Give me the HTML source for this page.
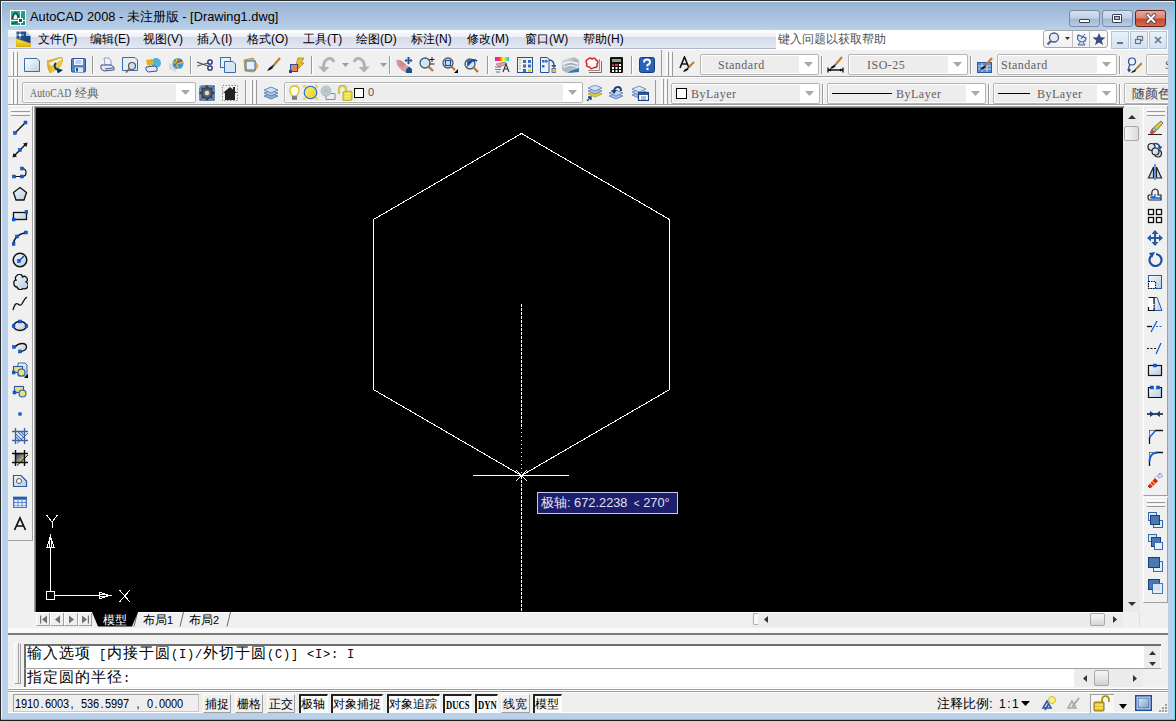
<!DOCTYPE html>
<html><head><meta charset="utf-8"><style>
html,body{margin:0;padding:0;width:1176px;height:721px;overflow:hidden;background:#b9d1ea}
#r{position:relative;width:1176px;height:721px;overflow:hidden;font-family:"Liberation Sans", sans-serif}
#r>div,#r>svg{position:absolute}
.t{white-space:nowrap}
.m{font-family:"Liberation Mono",monospace}
</style></head><body><div id="r">
<div style="left:0px;top:0px;width:1176px;height:721px;background:#b9d1ea"></div>
<div style="left:0px;top:0px;width:1176px;height:1px;background:#2a2a2a"></div>
<div style="left:0px;top:0px;width:1px;height:721px;background:#2a2a2a"></div>
<div style="left:1175px;top:0px;width:1px;height:721px;background:#3a9ad8"></div>
<div style="left:0px;top:720px;width:1176px;height:1px;background:#3a9ad8"></div>
<div style="left:1px;top:1px;width:1174px;height:1px;background:#eef3f9"></div>
<div style="left:1px;top:1px;width:1px;height:719px;background:#eef3f9"></div>
<div style="left:2px;top:2px;width:1172px;height:28px;background:linear-gradient(#97b2d2,#b9d1ea)"></div>
<svg style="left:10px;top:10px;" width="16" height="16" viewBox="0 0 16 16"><defs><linearGradient id="tg" x1="0" y1="0" x2="1" y2="1"><stop offset="0" stop-color="#2ab8a0"/><stop offset="1" stop-color="#12907c"/></linearGradient></defs><rect x="0" y="0" width="16" height="16" fill="#fff"/><rect x="1" y="1" width="14" height="14" fill="url(#tg)"/><path d="M2.5 9 Q3 3 5.5 3 Q8 3 8.5 9" stroke="#0a4a40" stroke-width="1.6" fill="none"/><path d="M3.5 9 Q4 4.5 5.5 4.5 Q7 4.5 7.5 9 Z" fill="#e8f8f4"/><rect x="10" y="1" width="1" height="14" fill="#fff"/><rect x="1" y="10" width="14" height="1" fill="#fff"/><rect x="8.5" y="8.5" width="4" height="4" fill="#0a5a4c" stroke="#fff" stroke-width="1"/><path d="M2 13.5 L7 12.5" stroke="#0a3a34" stroke-width="1"/></svg>
<div class="t" style="left:30px;top:9px;font-size:12.8px;color:#000;line-height:16px">AutoCAD 2008 - 未注册版 - [Drawing1.dwg]</div>
<div style="left:1069px;top:10px;width:31px;height:17px;border:1px solid #7a8aa6;border-radius:3px;box-sizing:border-box;background:linear-gradient(#d4e0ee 0%,#c2d2e6 45%,#a4bad4 55%,#b8cce2 100%)"></div>
<div style="left:1079px;top:19px;width:11px;height:4px;background:#fff;border:1px solid #3a3f55;border-radius:1px;box-sizing:border-box"></div>
<div style="left:1102px;top:10px;width:31px;height:17px;border:1px solid #7a8aa6;border-radius:3px;box-sizing:border-box;background:linear-gradient(#d4e0ee 0%,#c2d2e6 45%,#a4bad4 55%,#b8cce2 100%)"></div>
<div style="left:1112px;top:14px;width:10px;height:9px;border:1px solid #3a3f55;box-sizing:border-box;background:#fff;border-radius:1px"></div>
<div style="left:1114px;top:16px;width:6px;height:4px;background:#aabbd4;border:1px solid #3a3f55;box-sizing:border-box"></div>
<div style="left:1135px;top:10px;width:31px;height:17px;border:1px solid #6b2020;border-radius:3px;box-sizing:border-box;background:linear-gradient(#eaa898 0%,#dc8672 45%,#c44a2e 55%,#d66a48 100%)"></div>
<svg style="left:1145px;top:13px;" width="12" height="11" viewBox="0 0 12 11"><path d="M2.5 2 L9.5 9 M9.5 2 L2.5 9" stroke="#3a3f58" stroke-width="3.6" stroke-linecap="round"/><path d="M2.5 2 L9.5 9 M9.5 2 L2.5 9" stroke="#fff" stroke-width="2" stroke-linecap="round"/></svg>
<div style="left:8px;top:30px;width:1160px;height:7px;background:linear-gradient(#fdfdfe,#eef0f7)"></div>
<div style="left:8px;top:37px;width:1160px;height:11px;background:linear-gradient(#d5dbec,#e4e7f3)"></div>
<div style="left:8px;top:48px;width:1160px;height:1px;background:#b0b4c8"></div>
<svg style="left:16px;top:31px;" width="15" height="16" viewBox="0 0 15 16"><defs><linearGradient id="mg" x1="0" y1="0" x2="1" y2="1"><stop offset="0" stop-color="#2a5a9a"/><stop offset="1" stop-color="#0e3a78"/></linearGradient><linearGradient id="yg" x1="0" y1="0" x2="0" y2="1"><stop offset="0" stop-color="#ffe860"/><stop offset="1" stop-color="#e0b000"/></linearGradient></defs><path d="M0.5 0.5 H10 L14.5 5 V12 H0.5 Z" fill="url(#mg)"/><path d="M10 0.5 L14.5 5 H10 Z" fill="#b8cce0"/><circle cx="4" cy="4" r="1.6" fill="#fff"/><path d="M4 0 V2 M4 6 V8 M0 4 H2 M6 4 H8" stroke="#e8eef6" stroke-width="0.7"/><path d="M0 7.5 L14.8 12.5 V16 H0 Z" fill="url(#yg)" stroke="#c89800" stroke-width="0.5"/></svg>
<div class="t" style="left:38px;top:31px;font-size:12px;color:#000;line-height:16px">文件(F)</div>
<div class="t" style="left:90px;top:31px;font-size:12px;color:#000;line-height:16px">编辑(E)</div>
<div class="t" style="left:143px;top:31px;font-size:12px;color:#000;line-height:16px">视图(V)</div>
<div class="t" style="left:197px;top:31px;font-size:12px;color:#000;line-height:16px">插入(I)</div>
<div class="t" style="left:247px;top:31px;font-size:12px;color:#000;line-height:16px">格式(O)</div>
<div class="t" style="left:303px;top:31px;font-size:12px;color:#000;line-height:16px">工具(T)</div>
<div class="t" style="left:356px;top:31px;font-size:12px;color:#000;line-height:16px">绘图(D)</div>
<div class="t" style="left:411px;top:31px;font-size:12px;color:#000;line-height:16px">标注(N)</div>
<div class="t" style="left:467px;top:31px;font-size:12px;color:#000;line-height:16px">修改(M)</div>
<div class="t" style="left:525px;top:31px;font-size:12px;color:#000;line-height:16px">窗口(W)</div>
<div class="t" style="left:583px;top:31px;font-size:12px;color:#000;line-height:16px">帮助(H)</div>
<div style="left:776px;top:30px;width:392px;height:19px;background:#fff"></div>
<div class="t" style="left:778px;top:31px;font-size:12.3px;color:#505050;line-height:16px">键入问题以获取帮助</div>
<div style="left:1043px;top:30px;width:65px;height:18px;box-sizing:border-box;border:1px solid #a8a8a8;border-radius:3px;background:linear-gradient(#fdfdfd,#f0f0f0)"></div>
<div style="left:1072px;top:31px;width:1px;height:16px;background:#c0c0c0"></div>
<div style="left:1089px;top:31px;width:1px;height:16px;background:#c0c0c0"></div>
<svg style="left:1046px;top:32px;" width="14" height="14" viewBox="0 0 14 14"><circle cx="8" cy="5.5" r="4.5" fill="#e4ecf8" stroke="#4a5a8a" stroke-width="1.3"/><path d="M5 9 L1.5 12.5" stroke="#4a5a8a" stroke-width="2.2"/></svg>
<svg style="left:1065px;top:37px;" width="5" height="3" viewBox="0 0 5 3"><path d="M0 0 L5 0 L2.5 3 Z" fill="#333"/></svg>
<svg style="left:1075px;top:32px;" width="13" height="14" viewBox="0 0 13 14"><path d="M3 3 Q1 9 7 10 Q11 10 11 6 Z" fill="#dfe8f4" stroke="#3a5a9a" stroke-width="1.1"/><path d="M6 7 L10 2" stroke="#3a5a9a" stroke-width="1"/><path d="M5 10 L3 13 H10 L8 10" fill="#c8d8ec" stroke="#3a5a9a" stroke-width="0.9"/></svg>
<svg style="left:1092px;top:32px;" width="14" height="14" viewBox="0 0 14 14"><path d="M7 1 L8.8 5.3 L13.5 5.5 L9.8 8.4 L11 13 L7 10.4 L3 13 L4.2 8.4 L0.5 5.5 L5.2 5.3 Z" fill="#3a4e88"/></svg>
<div style="left:1111px;top:31px;width:18px;height:18px;box-sizing:border-box;border:1px solid #b4c4d8;background:linear-gradient(#e8f0f8,#d4e2f2)"></div>
<svg style="left:1114px;top:34px;" width="12" height="12" viewBox="0 0 12 12"><rect x="3" y="8" width="6" height="2" fill="#6a7484"/></svg>
<div style="left:1130px;top:31px;width:18px;height:18px;box-sizing:border-box;border:1px solid #b4c4d8;background:linear-gradient(#e8f0f8,#d4e2f2)"></div>
<svg style="left:1133px;top:34px;" width="12" height="12" viewBox="0 0 12 12"><rect x="4.5" y="2.5" width="5" height="4" fill="none" stroke="#6a7484" stroke-width="1.2"/><rect x="2.5" y="5.5" width="5" height="4" fill="#dde8f4" stroke="#6a7484" stroke-width="1.2"/></svg>
<div style="left:1149px;top:31px;width:18px;height:18px;box-sizing:border-box;border:1px solid #b4c4d8;background:linear-gradient(#e8f0f8,#d4e2f2)"></div>
<svg style="left:1152px;top:34px;" width="12" height="12" viewBox="0 0 12 12"><path d="M3 3 L9 9 M9 3 L3 9" stroke="#6a7484" stroke-width="1.6"/></svg>
<div style="left:8px;top:49px;width:1160px;height:58px;background:#f0f0f0"></div>
<div style="left:8px;top:49px;width:1160px;height:1px;background:#fff"></div>
<div style="left:8px;top:76px;width:1160px;height:1px;background:#a0a0a0"></div>
<div style="left:8px;top:77px;width:1160px;height:1px;background:#fff"></div>
<div style="left:8px;top:104px;width:1160px;height:1px;background:#a0a0a0"></div>
<div style="left:8px;top:105px;width:1160px;height:1px;background:#fff"></div>
<div style="left:11px;top:52px;width:3px;height:24px;border-left:1px solid #fff;border-right:1px solid #9a9a9a;box-sizing:border-box;background:#f4f4f4"></div>
<div style="left:15px;top:52px;width:3px;height:24px;border-left:1px solid #fff;border-right:1px solid #9a9a9a;box-sizing:border-box;background:#f4f4f4"></div>
<div style="left:661px;top:50px;width:1px;height:26px;background:#9a9a9a"></div>
<svg style="left:24px;top:57px;" width="16" height="16" viewBox="0 0 16 16"><defs><linearGradient id="gn" x1="0" y1="0" x2="1" y2="1"><stop offset="0" stop-color="#fff"/><stop offset="1" stop-color="#b8d4dc"/></linearGradient></defs><path d="M0.5 1.5 L13 1.5 L15.5 4 L15.5 14.5 L0.5 14.5 Z" fill="url(#gn)" stroke="#3a6cb0"/></svg>
<svg style="left:47px;top:57px;" width="16" height="16" viewBox="0 0 16 16"><path d="M0 4 L14.5 0 L16 3 L13 10 L3 16 L1 11 Z" fill="#e4b830" stroke="#b89020" stroke-width="0.6"/><path d="M2 6 L14 1 L15 2.5 L4 9 Z" fill="#e8f2fa"/><path d="M3 16 L6.5 8 L16 2.5 L13 10 Z" fill="#f0c830"/><path d="M9 6 Q6 9 9.5 12.5" stroke="#0e2e68" stroke-width="1.8" fill="none"/><path d="M8.5 10.5 L16 13 L11 16.5 Z" fill="#0e2e68"/></svg>
<svg style="left:71px;top:57px;" width="16" height="16" viewBox="0 0 16 16"><rect x="0.5" y="1.5" width="14" height="13.5" rx="1" fill="#4f86c8" stroke="#27509a"/><rect x="3" y="2" width="9" height="6" fill="#f4f8fc"/><path d="M4.5 4 H10.5 M4.5 6 H10.5" stroke="#8aa8cc"/><rect x="4" y="10.5" width="8" height="4.5" fill="#dfe8f0"/><rect x="5" y="11" width="2" height="3.5" fill="#27509a"/></svg>
<div style="left:92px;top:56px;width:1px;height:18px;background:#9a9a9a"></div>
<div style="left:93px;top:56px;width:1px;height:18px;background:#fff"></div>
<svg style="left:100px;top:57px;" width="16" height="16" viewBox="0 0 16 16"><path d="M4 1 L9 1 L11 4 L11 8 L5 8 Z" fill="#f4f4f8" stroke="#7d88a8" stroke-width="0.8"/><path d="M1 8 L11 8 L14 10 L14 13 L4 14 L1 12 Z" fill="#e4e8f4" stroke="#44508a"/><path d="M5 12 L13 11" stroke="#44508a"/></svg>
<svg style="left:122px;top:57px;" width="16" height="16" viewBox="0 0 16 16"><path d="M0.5 0.5 L13 0.5 L15.5 3 L15.5 13.5 L0.5 13.5 Z" fill="#e4eef6" stroke="#3a6cb0"/><circle cx="10" cy="9" r="3.5" fill="#cfe0f0" stroke="#555" stroke-width="1.2"/><path d="M7.5 11.5 L4 15.5" stroke="#a0622a" stroke-width="1.8"/></svg>
<svg style="left:145px;top:57px;" width="16" height="16" viewBox="0 0 16 16"><circle cx="11" cy="6" r="5" fill="#4fb3d9"/><path d="M1 3 L7 2 L9 6 L5 9 L2 8 Z" fill="#e0b420"/><path d="M1 10 L10 9 L12 11 L12 14 L3 15 L1 13 Z" fill="#e4e8f4" stroke="#44508a"/></svg>
<svg style="left:168px;top:57px;" width="16" height="16" viewBox="0 0 16 16"><path d="M1 6 L8 9 L8 15 L1 12 Z" fill="#d4dce8"/><circle cx="10" cy="6.5" r="5.5" fill="#3b9ad4"/><path d="M5 5 Q10 8 15 5 M9 1 Q7 7 11 12" stroke="#e8c020" stroke-width="1.2" fill="none"/><path d="M6 9 Q10 4 14 3" stroke="#d23a2a" stroke-width="1.2" fill="none"/></svg>
<div style="left:190px;top:56px;width:1px;height:18px;background:#9a9a9a"></div>
<div style="left:191px;top:56px;width:1px;height:18px;background:#fff"></div>
<svg style="left:197px;top:57px;" width="16" height="16" viewBox="0 0 16 16"><path d="M0 5 L11 9 M0 9 L11 6" stroke="#556" stroke-width="1.2"/><circle cx="13" cy="5" r="2.2" fill="none" stroke="#1d2a6a" stroke-width="1.3"/><circle cx="13" cy="11" r="2.2" fill="none" stroke="#1d2a6a" stroke-width="1.3"/></svg>
<svg style="left:220px;top:57px;" width="16" height="16" viewBox="0 0 16 16"><rect x="0.5" y="0.5" width="10" height="10" fill="#e8f0f8" stroke="#3a6cb0"/><path d="M4.5 4.5 L13 4.5 L15.5 7 L15.5 15.5 L4.5 15.5 Z" fill="#d8e6f2" stroke="#3a6cb0"/></svg>
<svg style="left:243px;top:57px;" width="16" height="16" viewBox="0 0 16 16"><path d="M1 3 L10 1 L15 9 L11 15 L2 14 Z" fill="#d8b860" stroke="#a88a30" stroke-width="0.8"/><rect x="3" y="4" width="9" height="9" fill="#e4eef8" stroke="#3a6cb0"/></svg>
<svg style="left:266px;top:57px;" width="16" height="16" viewBox="0 0 16 16"><path d="M14 1 L8 8" stroke="#c47a2a" stroke-width="2.2"/><path d="M8 8 L6 10" stroke="#3a4a5a" stroke-width="2"/><path d="M6 9 Q3 10 1 14 Q5 13 7 11 Z" fill="#111"/></svg>
<svg style="left:289px;top:57px;" width="16" height="16" viewBox="0 0 16 16"><path d="M9 1 L15 1 L12 6 L15 6 L8 13 L10 8 L7 8 Z" fill="#f0c020" stroke="#907010" stroke-width="0.6"/><rect x="1.5" y="7.5" width="7" height="7" fill="#f08050" stroke="#2a50a0"/><rect x="0" y="13" width="3" height="3" fill="#1040c0"/></svg>
<div style="left:311px;top:56px;width:1px;height:18px;background:#9a9a9a"></div>
<div style="left:312px;top:56px;width:1px;height:18px;background:#fff"></div>
<svg style="left:317px;top:57px;" width="18" height="16" viewBox="0 0 18 16"><path d="M17 5 Q15.5 0.5 11 1.8 Q6.5 3.5 6.5 10" stroke="#b0b2b8" stroke-width="3" fill="none"/><path d="M1 9.5 L7 15.5 L12.5 10 Z" fill="#b0b2b8"/></svg>
<svg style="left:342px;top:63px;" width="7" height="4" viewBox="0 0 7 4"><path d="M0 0 L7 0 L3.5 4 Z" fill="#9a9ab0"/></svg>
<svg style="left:353px;top:57px;" width="18" height="16" viewBox="0 0 18 16"><path d="M1 5 Q2.5 0.5 7 1.8 Q11.5 3.5 11.5 10" stroke="#b0b2b8" stroke-width="3" fill="none"/><path d="M17 9.5 L11 15.5 L5.5 10 Z" fill="#b0b2b8"/></svg>
<svg style="left:380px;top:63px;" width="7" height="4" viewBox="0 0 7 4"><path d="M0 0 L7 0 L3.5 4 Z" fill="#9a9ab0"/></svg>
<div style="left:389px;top:56px;width:1px;height:18px;background:#9a9a9a"></div>
<div style="left:390px;top:56px;width:1px;height:18px;background:#fff"></div>
<svg style="left:396px;top:57px;" width="17" height="16" viewBox="0 0 17 16"><path d="M1 5 Q0 3 2 3 Q6 3.5 11 9 L13 11 L10 15 Q6 14 3 10 Q1 8 1 5 Z" fill="#e0a0a0" stroke="#c08080" stroke-width="0.6"/><path d="M3 4.5 L8 9 M2.5 6.5 L7 10 M4 3.5 L9 8" stroke="#b87070" stroke-width="0.8"/><path d="M10 12.5 L13 9.5 L16 12 L16 16 L10 16 Z" fill="#1d4f8a"/><path d="M12.5 0 V7 M9 3.5 H16" stroke="#1d4f8a" stroke-width="1.3"/><path d="M12.5 -0.5 L10.8 1.5 H14.2 Z M12.5 7.5 L10.8 5.5 H14.2 Z M8.5 3.5 L10.5 1.8 V5.2 Z M16.5 3.5 L14.5 1.8 V5.2 Z" fill="#1d4f8a"/></svg>
<svg style="left:419px;top:57px;" width="16" height="16" viewBox="0 0 16 16"><circle cx="6" cy="6" r="5" fill="#cfe4f4" stroke="#4a5a6a" stroke-width="1.3"/><path d="M9.5 9.5 L14 14" stroke="#c07830" stroke-width="2.4"/><path d="M13 0 V5 M10.5 2.5 H15.5 M10.5 7 H15.5" stroke="#222" stroke-width="1"/></svg>
<svg style="left:442px;top:57px;" width="16" height="16" viewBox="0 0 16 16"><circle cx="6" cy="6" r="5" fill="#cfe4f4" stroke="#4a5a6a" stroke-width="1.3"/><rect x="3.5" y="3.5" width="5" height="5" fill="none" stroke="#27509a" stroke-width="1.2"/><path d="M9.5 9.5 L13 13" stroke="#c07830" stroke-width="2.2"/><path d="M12 16 L16 12 L16 16 Z" fill="#000"/></svg>
<svg style="left:464px;top:57px;" width="16" height="16" viewBox="0 0 16 16"><circle cx="6" cy="7" r="5" fill="#cfe4f4" stroke="#4a5a6a" stroke-width="1.3"/><path d="M9.5 10.5 L14 15" stroke="#c07830" stroke-width="2.4"/><path d="M4 8 L4 4 L8 4 Z M5 5 Q9 1 13 4" stroke="#1d4f9a" stroke-width="1.6" fill="#1d4f9a"/></svg>
<div style="left:487px;top:56px;width:1px;height:18px;background:#9a9a9a"></div>
<div style="left:488px;top:56px;width:1px;height:18px;background:#fff"></div>
<svg style="left:494px;top:57px;" width="16" height="16" viewBox="0 0 16 16"><rect x="1" y="0" width="14" height="4" fill="url(#rb)"/><defs><linearGradient id="rb"><stop offset="0" stop-color="#f0f"/><stop offset="0.3" stop-color="#f33"/><stop offset="0.6" stop-color="#ff0"/><stop offset="1" stop-color="#0cf"/></linearGradient></defs><path d="M2 7 L11 5 L13 7 L5 10 Z" fill="#e0a0a0" stroke="#a06060" stroke-width="0.6"/><path d="M1 10 H7 M1 12.5 H7 M2 15 H6" stroke="#5a7a9a" stroke-width="1.2"/><path d="M9 15 L12 7 L15 15 M10 12 H14" stroke="#333" stroke-width="1.1" fill="none"/></svg>
<svg style="left:517px;top:57px;" width="16" height="16" viewBox="0 0 16 16"><rect x="0.5" y="0.5" width="15" height="15" fill="#eef2f8" stroke="#27509a"/><path d="M3 2 V14" stroke="#c8b020" stroke-width="1.2" stroke-dasharray="1.5,1.5"/><rect x="6" y="3" width="3" height="3" fill="#3a6cb0"/><rect x="11" y="3" width="3" height="3" fill="#3a6cb0"/><rect x="6" y="7.5" width="3" height="3" fill="#3a6cb0"/><rect x="11" y="7.5" width="3" height="3" fill="#3a6cb0"/><rect x="6" y="12" width="3" height="3" fill="#3a6cb0"/><rect x="11" y="12" width="3" height="3" fill="#e8d030"/></svg>
<svg style="left:540px;top:57px;" width="16" height="16" viewBox="0 0 16 16"><path d="M0.5 0.5 H7 L9 2 V15.5 H0.5 Z" fill="#eef2f8" stroke="#27509a"/><rect x="2" y="3" width="2.5" height="2.5" fill="#3a6cb0"/><rect x="5" y="3" width="2.5" height="2.5" fill="#3a6cb0"/><rect x="2" y="8" width="2.5" height="2.5" fill="#3a6cb0"/><path d="M9 3 Q14 3 14 9" stroke="#27509a" stroke-width="1.4" fill="none"/><path d="M11 8 L17 8 L14 11 Z" fill="#27509a"/><rect x="12" y="11.5" width="4" height="4" fill="#e8d030" stroke="#27509a" stroke-width="0.7"/></svg>
<svg style="left:562px;top:57px;" width="17" height="16" viewBox="0 0 17 16"><defs><linearGradient id="ss" x1="0" y1="0" x2="1" y2="1"><stop offset="0" stop-color="#e8ecf0"/><stop offset="0.5" stop-color="#a8b4c0"/><stop offset="1" stop-color="#d0d8e0"/></linearGradient></defs><path d="M0 3 L12 0 L17 3 L17 15 L5 16 L0 13 Z" fill="url(#ss)"/><path d="M1 7 Q8 3 16 7 M2 10 Q9 6 16 10" stroke="#f4f6f8" stroke-width="1.5" fill="none"/><path d="M3 9 Q9 5 15 9" stroke="#8090a0" stroke-width="0.8" fill="none"/><path d="M8 14 L17 11 V15 L6 16 Z" fill="#3a78b0"/></svg>
<svg style="left:585px;top:57px;" width="17" height="16" viewBox="0 0 17 16"><path d="M4 15.5 H16.5 V4" stroke="#707070" stroke-width="1" fill="none"/><path d="M3 13.5 H14.5 V2" stroke="#909090" stroke-width="1" fill="none"/><rect x="1" y="1" width="12" height="12" fill="#fafafa"/><path d="M2.5 2.5 Q5 0 7 2 Q10 0 11 3 Q14 4 12 7 Q13 11 9 10.5 Q6 13 4.5 10 Q0.5 10 2 7 Q0 4 2.5 2.5 Z" fill="#fff" stroke="#e02828" stroke-width="1.6"/></svg>
<svg style="left:609px;top:57px;" width="16" height="16" viewBox="0 0 16 16"><rect x="1" y="0" width="13" height="16" rx="1" fill="#111"/><rect x="3" y="2" width="9" height="3" fill="#8aa880"/><g fill="#fff"><rect x="3" y="7" width="2" height="2"/><rect x="6.5" y="7" width="2" height="2"/><rect x="10" y="7" width="2" height="2"/><rect x="3" y="10" width="2" height="2"/><rect x="6.5" y="10" width="2" height="2"/><rect x="10" y="10" width="2" height="2"/><rect x="3" y="13" width="2" height="2"/><rect x="6.5" y="13" width="2" height="2"/><rect x="10" y="13" width="2" height="2"/></g><rect x="3" y="7" width="2" height="2" fill="#e03030"/><rect x="6.5" y="7" width="2" height="2" fill="#e03030"/></svg>
<div style="left:631px;top:56px;width:1px;height:18px;background:#9a9a9a"></div>
<div style="left:632px;top:56px;width:1px;height:18px;background:#fff"></div>
<svg style="left:639px;top:57px;" width="16" height="16" viewBox="0 0 16 16"><rect x="0.5" y="0.5" width="15" height="15" rx="2" fill="#2a62b8" stroke="#1a3a78"/><path d="M5 5.5 Q5 2.5 8 2.5 Q11 2.5 11 5 Q11 7 8.5 8 V9.5" stroke="#fff" stroke-width="2" fill="none"/><rect x="7.5" y="11" width="2" height="2" fill="#fff"/></svg>
<div style="left:666px;top:52px;width:3px;height:24px;border-left:1px solid #fff;border-right:1px solid #9a9a9a;box-sizing:border-box;background:#f4f4f4"></div>
<div style="left:670px;top:52px;width:3px;height:24px;border-left:1px solid #fff;border-right:1px solid #9a9a9a;box-sizing:border-box;background:#f4f4f4"></div>
<svg style="left:679px;top:56px;" width="16" height="16" viewBox="0 0 16 16"><path d="M1 12 L5.5 1 L10 12 M3 8 H8.5" stroke="#111" stroke-width="1.6" fill="none"/><path d="M15 6 L10 11" stroke="#c47a2a" stroke-width="2"/><path d="M10 11 L8 13" stroke="#3a5a6a" stroke-width="1.6"/><path d="M8.5 12 Q5 13 4 16 Q7 15.5 9.5 13.5 Z" fill="#111"/></svg>
<div style="left:700px;top:54px;width:119px;height:21px;box-sizing:border-box;border:1px solid #b4b4b4;border-radius:2px;background:#fff"></div>
<div style="left:702px;top:56px;width:97px;height:17px;background:#ededed"></div>
<svg style="left:804px;top:62px;" width="9" height="5" viewBox="0 0 9 5"><path d="M0 0 L9 0 L4.5 5 Z" fill="#a8a8a8"/></svg>
<div class="t" style="left:718px;top:59px;font-family:Liberation Serif,serif;font-size:12px;letter-spacing:0.5px;line-height:13px;color:#606060;">Standard</div>
<div style="left:821px;top:56px;width:1px;height:18px;background:#9a9a9a"></div>
<div style="left:822px;top:56px;width:1px;height:18px;background:#fff"></div>
<svg style="left:827px;top:56px;" width="17" height="17" viewBox="0 0 17 17"><path d="M15 1 L9 8" stroke="#c47a2a" stroke-width="2"/><path d="M9 8 L7 10" stroke="#3a5a6a" stroke-width="1.6"/><path d="M7.5 9 Q4 10 3 13 Q6 12.5 8.5 10.5 Z" fill="#111"/><path d="M1 14 H16 M1 11.5 V16.5 M16 11.5 V16.5" stroke="#111" stroke-width="1.3"/><path d="M1 14 L4 12.5 V15.5 Z M16 14 L13 12.5 V15.5 Z" fill="#111"/></svg>
<div style="left:848px;top:54px;width:120px;height:21px;box-sizing:border-box;border:1px solid #b4b4b4;border-radius:2px;background:#fff"></div>
<div style="left:850px;top:56px;width:98px;height:17px;background:#ededed"></div>
<svg style="left:953px;top:62px;" width="9" height="5" viewBox="0 0 9 5"><path d="M0 0 L9 0 L4.5 5 Z" fill="#a8a8a8"/></svg>
<div class="t" style="left:867px;top:59px;font-family:Liberation Serif,serif;font-size:12px;letter-spacing:0.5px;line-height:13px;color:#606060;">ISO-25</div>
<div style="left:970px;top:56px;width:1px;height:18px;background:#9a9a9a"></div>
<div style="left:971px;top:56px;width:1px;height:18px;background:#fff"></div>
<svg style="left:977px;top:57px;" width="16" height="16" viewBox="0 0 16 16"><rect x="0.5" y="5.5" width="14" height="10" fill="#5a8ad0" stroke="#2a5aa0"/><path d="M1 9 H14 M1 12 H14 M5 6 V15 M10 6 V15" stroke="#dfe8f4" stroke-width="0.8"/><path d="M15 1 L9 8" stroke="#c47a2a" stroke-width="2"/><path d="M9 8 L7 10" stroke="#3a5a6a" stroke-width="1.6"/><path d="M7.5 9 Q4 10 3 13 Q6 12.5 8.5 10.5 Z" fill="#111"/></svg>
<div style="left:997px;top:54px;width:120px;height:21px;box-sizing:border-box;border:1px solid #b4b4b4;border-radius:2px;background:#fff"></div>
<div style="left:999px;top:56px;width:98px;height:17px;background:#ededed"></div>
<svg style="left:1102px;top:62px;" width="9" height="5" viewBox="0 0 9 5"><path d="M0 0 L9 0 L4.5 5 Z" fill="#a8a8a8"/></svg>
<div class="t" style="left:1001px;top:59px;font-family:Liberation Serif,serif;font-size:12px;letter-spacing:0.5px;line-height:13px;color:#606060;">Standard</div>
<div style="left:1119px;top:56px;width:1px;height:18px;background:#9a9a9a"></div>
<div style="left:1120px;top:56px;width:1px;height:18px;background:#fff"></div>
<svg style="left:1126px;top:57px;" width="16" height="16" viewBox="0 0 16 16"><circle cx="6" cy="4.5" r="3.5" fill="#eef4fa" stroke="#27509a" stroke-width="1.2"/><path d="M4 7.5 Q2 10 3 14" stroke="#27509a" stroke-width="1.2" fill="none"/><path d="M1 12 L3 15.5 L5.5 12.5 Z" fill="#27509a"/><path d="M16 6 L10 12" stroke="#c47a2a" stroke-width="2"/><path d="M10 12 L8.5 13.5" stroke="#3a5a6a" stroke-width="1.6"/><path d="M9 13 Q6 13.5 5 16 Q8 15.5 10 14 Z" fill="#111"/></svg>
<div style="left:1146px;top:54px;width:60px;height:21px;box-sizing:border-box;border:1px solid #b4b4b4;border-radius:2px;background:#fff"></div>
<div style="left:1148px;top:56px;width:38px;height:17px;background:#ededed"></div>
<div class="t" style="left:1165px;top:59px;font-family:Liberation Serif,serif;font-size:12px;letter-spacing:0.5px;line-height:13px;color:#606060;">Standard</div>
<div style="left:11px;top:79px;width:3px;height:25px;border-left:1px solid #fff;border-right:1px solid #9a9a9a;box-sizing:border-box;background:#f4f4f4"></div>
<div style="left:15px;top:79px;width:3px;height:25px;border-left:1px solid #fff;border-right:1px solid #9a9a9a;box-sizing:border-box;background:#f4f4f4"></div>
<div style="left:22px;top:82px;width:174px;height:21px;box-sizing:border-box;border:1px solid #b4b4b4;border-radius:2px;background:#fff"></div>
<div style="left:24px;top:84px;width:152px;height:17px;background:#ededed"></div>
<svg style="left:181px;top:90px;" width="9" height="5" viewBox="0 0 9 5"><path d="M0 0 L9 0 L4.5 5 Z" fill="#a8a8a8"/></svg>
<div class="t" style="left:30px;top:87px;font-family:Liberation Serif,serif;font-size:12px;letter-spacing:0.5px;line-height:13px;color:#606060;"><span style="font-size:11.5px;letter-spacing:0.2px;display:inline-block;transform:scaleX(0.85);transform-origin:0 0;margin-right:-7px">AutoCAD</span> <span style="font-size:11.5px;letter-spacing:0">经典</span></div>
<svg style="left:199px;top:85px;" width="16" height="16" viewBox="0 0 16 16"><rect x="0" y="0" width="16" height="16" fill="#5a8ac8"/><path d="M0 0 H3 M0 0 V3 M13 0 H16 V3 M0 13 V16 H3 M16 13 V16 H13" stroke="#fff" stroke-width="1"/><circle cx="8" cy="8" r="5.5" fill="#555" stroke="#333"/><g stroke="#444" stroke-width="2.2"><path d="M8 0.5 V15.5 M0.5 8 H15.5 M2.7 2.7 L13.3 13.3 M13.3 2.7 L2.7 13.3"/></g><circle cx="8" cy="8" r="4" fill="#666"/><circle cx="8" cy="8" r="2.2" fill="#cfe0f0"/></svg>
<svg style="left:222px;top:85px;" width="16" height="16" viewBox="0 0 16 16"><rect x="0.5" y="0.5" width="15" height="15" fill="none" stroke="#888" stroke-dasharray="1.5,1.5"/><path d="M1 8 L8 2 L15 8 L13 8 L13 15 L3 15 L3 8 Z" fill="#222"/><rect x="11" y="2" width="2" height="4" fill="#222"/></svg>
<div style="left:245px;top:80px;width:1px;height:24px;background:#9a9a9a"></div>
<div style="left:246px;top:80px;width:1px;height:24px;background:#fff"></div>
<div style="left:250px;top:80px;width:3px;height:24px;border-left:1px solid #fff;border-right:1px solid #9a9a9a;box-sizing:border-box;background:#f4f4f4"></div>
<div style="left:254px;top:80px;width:3px;height:24px;border-left:1px solid #fff;border-right:1px solid #9a9a9a;box-sizing:border-box;background:#f4f4f4"></div>
<svg style="left:263px;top:86px;" width="16" height="16" viewBox="0 0 16 16"><g stroke="#4a72a8" stroke-width="0.8"><path d="M1 10 L8 7 L15 10 L8 13 Z" fill="#8fb0d8"/><path d="M1 7 L8 4 L15 7 L8 10 Z" fill="#b0c8e8"/><path d="M1 4 L8 1 L15 4 L8 7 Z" fill="#d0e0f4"/></g></svg>
<div style="left:284px;top:82px;width:299px;height:21px;box-sizing:border-box;border:1px solid #b4b4b4;border-radius:2px;background:#fff"></div>
<div style="left:286px;top:84px;width:277px;height:17px;background:#ededed"></div>
<svg style="left:568px;top:90px;" width="9" height="5" viewBox="0 0 9 5"><path d="M0 0 L9 0 L4.5 5 Z" fill="#a8a8a8"/></svg>
<svg style="left:289px;top:85px;" width="11" height="16" viewBox="0 0 11 16"><path d="M5.5 1 Q10 1 10 5.5 Q10 8 8 10 V11 H3 V10 Q1 8 1 5.5 Q1 1 5.5 1 Z" fill="#fffef0" stroke="#d8c020" stroke-width="1.3"/><rect x="3" y="11.5" width="5" height="3" fill="#3a4a8a"/><path d="M3 13 H8" stroke="#c0c8e0" stroke-width="0.7"/></svg>
<svg style="left:303px;top:85px;" width="15" height="15" viewBox="0 0 15 15"><defs><linearGradient id="sun" x1="0" y1="0" x2="1" y2="1"><stop offset="0" stop-color="#fff060"/><stop offset="1" stop-color="#e8c820"/></linearGradient></defs><rect x="0" y="0" width="3" height="3" fill="#f0e040"/><rect x="12" y="0" width="3" height="3" fill="#f0e040"/><rect x="0" y="12" width="3" height="3" fill="#f0e040"/><rect x="12" y="12" width="3" height="3" fill="#f0e040"/><circle cx="7.5" cy="7.5" r="6.3" fill="url(#sun)" stroke="#1a6ad0" stroke-width="1.1"/></svg>
<svg style="left:320px;top:85px;" width="16" height="16" viewBox="0 0 16 16"><circle cx="6" cy="6" r="5.5" fill="#a8c8e8"/><g stroke="#d8d0a0" stroke-width="1"><path d="M6 1.5 V10.5 M1.5 6 H10.5 M2.8 2.8 L9.2 9.2 M9.2 2.8 L2.8 9.2"/></g><circle cx="6" cy="6" r="2.2" fill="#c8c090"/><path d="M10.5 8.5 H15 V14.5 H6 V10.5" fill="none" stroke="#7a90b0" stroke-width="1"/></svg>
<svg style="left:337px;top:85px;" width="16" height="16" viewBox="0 0 16 16"><path d="M2 9 V5 Q2 1 5.5 1 Q9 1 9 5 V6" stroke="#b8b020" stroke-width="2.2" fill="none"/><path d="M2 9 V5 Q2 1 5.5 1 Q9 1 9 5 V6" stroke="#f0f080" stroke-width="0.8" fill="none"/><path d="M6 7 L14 6 Q15 6 15 7 V14 Q15 15 14 15 L7 16 Q6 16 6 15 Z" fill="#e8e040" stroke="#a09810" stroke-width="0.8"/><path d="M8 9 L13 8.5 M8 11.5 L13 11 M8 14 L13 13.5" stroke="#fff8a0" stroke-width="0.8"/></svg>
<div style="left:354px;top:88px;width:10px;height:10px;border:1.5px solid #000;background:#fff;box-sizing:border-box"></div>
<div class="t" style="left:368px;top:86px;font-size:11px;line-height:13px;color:#555">0</div>
<svg style="left:586px;top:85px;" width="17" height="16" viewBox="0 0 17 16"><g stroke="#4a72a8" stroke-width="0.7"><path d="M2 9 L9 6 L16 9 L9 12 Z" fill="#e8d030" stroke="#a09010"/><path d="M2 6 L9 3 L16 6 L9 9 Z" fill="#b0c8e8"/><path d="M2 3 L9 0 L16 3 L9 6 Z" fill="#d0e0f4"/></g><path d="M1 16 L5 12 M2 12 H5 V15" stroke="#1d3f78" stroke-width="1.3" fill="none"/></svg>
<svg style="left:608px;top:85px;" width="17" height="16" viewBox="0 0 17 16"><g stroke="#4a72a8" stroke-width="0.7"><path d="M1 11 L8 8 L15 11 L8 14 Z" fill="#a0bce0"/><path d="M1 8 L8 5 L15 8 L8 11 Z" fill="#c0d4ec"/></g><path d="M6 7 Q6 2 10 2 Q13 2 13 6" stroke="#1d3f78" stroke-width="2" fill="none"/><path d="M3 5 L6 9 L9 5 Z" fill="#1d3f78"/></svg>
<svg style="left:632px;top:85px;" width="17" height="16" viewBox="0 0 17 16"><g stroke="#4a72a8" stroke-width="0.7"><path d="M0 10 L7 7 L14 10 L7 13 Z" fill="#a0bce0"/><path d="M0 7 L7 4 L14 7 L7 10 Z" fill="#c0d4ec"/><path d="M0 4 L7 1 L14 4 L7 7 Z" fill="#d8e6f6"/></g><rect x="6.5" y="7.5" width="10" height="8" fill="#fff" stroke="#1d3f78" stroke-width="1.2"/><rect x="7" y="8" width="9" height="2" fill="#2a5aa0"/><path d="M9 12 H14 M9 14 H14" stroke="#2a5aa0" stroke-width="0.8"/></svg>
<div style="left:655px;top:80px;width:1px;height:24px;background:#9a9a9a"></div>
<div style="left:661px;top:79px;width:3px;height:25px;border-left:1px solid #fff;border-right:1px solid #9a9a9a;box-sizing:border-box;background:#f4f4f4"></div>
<div style="left:665px;top:79px;width:3px;height:25px;border-left:1px solid #fff;border-right:1px solid #9a9a9a;box-sizing:border-box;background:#f4f4f4"></div>
<div style="left:671px;top:83px;width:149px;height:21px;box-sizing:border-box;border:1px solid #b4b4b4;border-radius:2px;background:#fff"></div>
<div style="left:673px;top:85px;width:127px;height:17px;background:#ededed"></div>
<svg style="left:805px;top:91px;" width="9" height="5" viewBox="0 0 9 5"><path d="M0 0 L9 0 L4.5 5 Z" fill="#a8a8a8"/></svg>
<div class="t" style="left:691px;top:88px;font-family:Liberation Serif,serif;font-size:12px;letter-spacing:0.5px;line-height:13px;color:#606060;">ByLayer</div>
<div style="left:676px;top:88px;width:11px;height:11px;border:1px solid #000;background:#fff;box-sizing:border-box"></div>
<div style="left:822px;top:84px;width:1px;height:20px;background:#9a9a9a"></div>
<div style="left:823px;top:84px;width:1px;height:20px;background:#fff"></div>
<div style="left:827px;top:83px;width:159px;height:21px;box-sizing:border-box;border:1px solid #b4b4b4;border-radius:2px;background:#fff"></div>
<div style="left:829px;top:85px;width:137px;height:17px;background:#ededed"></div>
<svg style="left:971px;top:91px;" width="9" height="5" viewBox="0 0 9 5"><path d="M0 0 L9 0 L4.5 5 Z" fill="#a8a8a8"/></svg>
<div class="t" style="left:896px;top:88px;font-family:Liberation Serif,serif;font-size:12px;letter-spacing:0.5px;line-height:13px;color:#606060;">ByLayer</div>
<div style="left:832px;top:93px;width:60px;height:1px;background:#000"></div>
<div style="left:988px;top:84px;width:1px;height:20px;background:#9a9a9a"></div>
<div style="left:989px;top:84px;width:1px;height:20px;background:#fff"></div>
<div style="left:993px;top:83px;width:124px;height:21px;box-sizing:border-box;border:1px solid #b4b4b4;border-radius:2px;background:#fff"></div>
<div style="left:995px;top:85px;width:102px;height:17px;background:#ededed"></div>
<svg style="left:1102px;top:91px;" width="9" height="5" viewBox="0 0 9 5"><path d="M0 0 L9 0 L4.5 5 Z" fill="#a8a8a8"/></svg>
<div class="t" style="left:1037px;top:88px;font-family:Liberation Serif,serif;font-size:12px;letter-spacing:0.5px;line-height:13px;color:#606060;">ByLayer</div>
<div style="left:998px;top:93px;width:32px;height:1px;background:#000"></div>
<div style="left:1119px;top:84px;width:1px;height:20px;background:#9a9a9a"></div>
<div style="left:1120px;top:84px;width:1px;height:20px;background:#fff"></div>
<div style="left:1124px;top:83px;width:80px;height:21px;box-sizing:border-box;border:1px solid #b4b4b4;border-radius:2px;background:#fff"></div>
<div style="left:1126px;top:85px;width:58px;height:17px;background:#ededed"></div>
<div class="t" style="left:1132px;top:85px;font-size:13px;line-height:17px;color:#444">随颜色</div>
<div style="left:8px;top:106px;width:1160px;height:528px;background:#f0f0f0"></div>
<div style="left:35px;top:107px;width:1089px;height:505px;background:#000"></div>
<div style="left:1123px;top:107px;width:17px;height:505px;background:#eaeaea"></div>
<svg style="left:1128px;top:115px;" width="8" height="4" viewBox="0 0 8 4"><path d="M0 4 L4 0 L8 4 Z" fill="#333"/></svg>
<div style="left:1124px;top:126px;width:15px;height:15px;background:linear-gradient(90deg,#f6f6f6,#dcdcdc);border:1px solid #a8a8a8;border-radius:2px;box-sizing:border-box"></div>
<svg style="left:1128px;top:602px;" width="8" height="4" viewBox="0 0 8 4"><path d="M0 0 L4 4 L8 0 Z" fill="#333"/></svg>
<div style="left:35px;top:612px;width:1105px;height:15px;background:#f0f0f0"></div>
<div style="left:35px;top:612px;width:1088px;height:1px;background:#fff"></div>
<div style="left:8px;top:627px;width:1160px;height:1px;background:#f0f0f0"></div>
<div style="left:8px;top:628px;width:1160px;height:5px;background:#fafafa"></div>
<div style="left:8px;top:633px;width:1160px;height:2px;background:#7a7a7a"></div>
<div style="left:8px;top:106px;width:25px;height:435px;background:#f0f0f0;border-right:1px solid #a0a0a0;border-bottom:1px solid #a0a0a0;box-sizing:border-box"></div>
<div style="left:33px;top:106px;width:1px;height:435px;background:#fff"></div>
<div style="left:11px;top:109px;width:19px;height:3px;border-top:1px solid #fff;border-bottom:1px solid #9a9a9a;box-sizing:border-box"></div>
<div style="left:11px;top:113px;width:19px;height:3px;border-top:1px solid #fff;border-bottom:1px solid #9a9a9a;box-sizing:border-box"></div>
<svg style="left:0px;top:0px;" width="1" height="1" viewBox="0 0 1 1"><defs><linearGradient id="gp" x1="0" y1="0" x2="1" y2="1"><stop offset="0" stop-color="#f4f8fc"/><stop offset="1" stop-color="#b8cce0"/></linearGradient><linearGradient id="gg" x1="0" y1="0" x2="1" y2="1"><stop offset="0" stop-color="#2a3a80"/><stop offset="1" stop-color="#e0e060"/></linearGradient></defs></svg>
<svg style="left:12px;top:120px;" width="16" height="16" viewBox="0 0 16 16"><path d="M3 13 L13 3" stroke="#111" stroke-width="1.4"/><rect x="1.5" y="11.5" width="3" height="3" fill="#1060e0" stroke="#0040a0" stroke-width="0.5"/><rect x="12.0" y="1.0" width="3" height="3" fill="#1060e0" stroke="#0040a0" stroke-width="0.5"/></svg>
<svg style="left:12px;top:142px;" width="16" height="16" viewBox="0 0 16 16"><path d="M1.5 14.5 L14.5 1.5" stroke="#111" stroke-width="1.4"/><path d="M0.5 15.5 L1.5 11 L5 14.5 Z M15.5 0.5 L11 1.5 L14.5 5 Z" fill="#111"/><rect x="6.5" y="6.5" width="3" height="3" fill="#1060e0" stroke="#0040a0" stroke-width="0.5"/></svg>
<svg style="left:12px;top:164px;" width="16" height="16" viewBox="0 0 16 16"><path d="M1 12.5 H10 Q14 12.5 14 8.5 Q14 4.5 10 4.5" stroke="#111" stroke-width="1.2" fill="none"/><rect x="0.5" y="11.0" width="3" height="3" fill="#1060e0" stroke="#0040a0" stroke-width="0.5"/><rect x="8.5" y="11.0" width="3" height="3" fill="#1060e0" stroke="#0040a0" stroke-width="0.5"/><rect x="8.5" y="3.0" width="3" height="3" fill="#1060e0" stroke="#0040a0" stroke-width="0.5"/></svg>
<svg style="left:12px;top:186px;" width="16" height="16" viewBox="0 0 16 16"><path d="M8 1.5 L14.5 6.5 L12 14 L4 14 L1.5 6.5 Z" fill="url(#gp)" stroke="#111" stroke-width="1.3"/></svg>
<svg style="left:12px;top:208px;" width="16" height="16" viewBox="0 0 16 16"><rect x="1.5" y="4.5" width="13" height="7" fill="url(#gp)" stroke="#111" stroke-width="1.3"/><rect x="0.0" y="10.0" width="3" height="3" fill="#1060e0" stroke="#0040a0" stroke-width="0.5"/><rect x="13.0" y="2.5" width="3" height="3" fill="#1060e0" stroke="#0040a0" stroke-width="0.5"/></svg>
<svg style="left:12px;top:230px;" width="16" height="16" viewBox="0 0 16 16"><path d="M1.5 14 Q2 5 14 2.5" stroke="#111" stroke-width="1.4" fill="none"/><rect x="0.0" y="12.5" width="3" height="3" fill="#1060e0" stroke="#0040a0" stroke-width="0.5"/><rect x="3.5" y="5.0" width="3" height="3" fill="#1060e0" stroke="#0040a0" stroke-width="0.5"/><rect x="12.5" y="1.0" width="3" height="3" fill="#1060e0" stroke="#0040a0" stroke-width="0.5"/></svg>
<svg style="left:12px;top:252px;" width="16" height="16" viewBox="0 0 16 16"><circle cx="8" cy="8" r="6.8" fill="url(#gp)" stroke="#111" stroke-width="1.5"/><path d="M7 9 L12 4" stroke="#0040a0" stroke-width="1.2"/><rect x="5.5" y="7.5" width="3" height="3" fill="#1060e0" stroke="#0040a0" stroke-width="0.5"/></svg>
<svg style="left:12px;top:274px;" width="16" height="16" viewBox="0 0 16 16"><path d="M4 6 A3 3 0 0 1 5 1.5 A3 3 0 0 1 10.5 3 A3 3 0 0 1 14 8 A3.5 3.5 0 0 1 11 14.5 A3.5 3.5 0 0 1 5 13 A3 3 0 0 1 2 9.5 A2.5 2.5 0 0 1 4 6 Z" fill="url(#gp)" stroke="#111" stroke-width="1.3"/></svg>
<svg style="left:12px;top:296px;" width="16" height="16" viewBox="0 0 16 16"><path d="M1 14 Q3 6 6 8 Q9 11 11 6 Q13 2 15 1" stroke="#111" stroke-width="1.3" fill="none"/></svg>
<svg style="left:12px;top:318px;" width="16" height="16" viewBox="0 0 16 16"><ellipse cx="8" cy="8" rx="6.5" ry="4.5" fill="url(#gp)" stroke="#111" stroke-width="1.4"/><rect x="0.0" y="6.5" width="3" height="3" fill="#1060e0" stroke="#0040a0" stroke-width="0.5"/><rect x="6.5" y="2.0" width="3" height="3" fill="#1060e0" stroke="#0040a0" stroke-width="0.5"/><rect x="13.0" y="6.5" width="3" height="3" fill="#1060e0" stroke="#0040a0" stroke-width="0.5"/></svg>
<svg style="left:12px;top:340px;" width="16" height="16" viewBox="0 0 16 16"><path d="M3 7 Q6 3.5 10 3.5 Q14.5 3.5 14.5 7 Q14.5 11 8 11.5" fill="url(#gp)" stroke="#111" stroke-width="1.3"/><rect x="0.5" y="5.5" width="3" height="3" fill="#1060e0" stroke="#0040a0" stroke-width="0.5"/><rect x="6.5" y="10.0" width="3" height="3" fill="#1060e0" stroke="#0040a0" stroke-width="0.5"/></svg>
<svg style="left:12px;top:362px;" width="16" height="16" viewBox="0 0 16 16"><path d="M6 1 H13 L15 3 V14 H6 Z" fill="url(#gp)" stroke="#2a5aa0" stroke-width="0.9"/><rect x="1.5" y="4.5" width="9" height="6" fill="#e8e080" stroke="#2a5aa0" stroke-width="1.1"/><circle cx="9.5" cy="10.5" r="3.5" fill="#e8e080" stroke="#2a5aa0" stroke-width="1.1"/><path d="M12 16 L16 12 V16 Z" fill="#000"/><rect x="0.0" y="9.0" width="3" height="3" fill="#1060e0" stroke="#0040a0" stroke-width="0.5"/></svg>
<svg style="left:12px;top:384px;" width="16" height="16" viewBox="0 0 16 16"><rect x="2.5" y="2.5" width="9" height="6" fill="#e8e080" stroke="#2a5aa0" stroke-width="1.1"/><circle cx="10.5" cy="9.5" r="3.5" fill="#e8e080" stroke="#2a5aa0" stroke-width="1.1"/><rect x="1.0" y="7.0" width="3" height="3" fill="#1060e0" stroke="#0040a0" stroke-width="0.5"/></svg>
<svg style="left:12px;top:406px;" width="16" height="16" viewBox="0 0 16 16"><rect x="6.75" y="6.75" width="2.5" height="2.5" fill="#1060e0" stroke="#0040a0" stroke-width="0.5"/></svg>
<svg style="left:12px;top:428px;" width="16" height="16" viewBox="0 0 16 16"><rect x="4" y="4" width="8" height="8" fill="#fff"/><path d="M4 6 L10 12 M4 9 L7 12 M6 4 L12 10 M9 4 L12 7" stroke="#4a72b0" stroke-width="1.1"/><path d="M3.5 0 V16 M12.5 0 V16 M0 3.5 H16 M0 12.5 H16" stroke="#3a62a8" stroke-width="1.3"/><path d="M5 15.5 L16 5" stroke="#3a62a8" stroke-width="1"/></svg>
<svg style="left:12px;top:450px;" width="16" height="16" viewBox="0 0 16 16"><rect x="4" y="4" width="8" height="8" fill="url(#gg)"/><path d="M3.5 0 V16 M12.5 0 V16 M0 3.5 H16 M0 12.5 H16" stroke="#111" stroke-width="1.4"/><path d="M5 15.5 L16 5" stroke="#111" stroke-width="1"/></svg>
<svg style="left:12px;top:472px;" width="16" height="16" viewBox="0 0 16 16"><path d="M1.5 3.5 H9 L14.5 9 V14.5 H1.5 Z" fill="url(#gp)" stroke="#2a5aa0" stroke-width="1.2"/><circle cx="7" cy="9" r="2.5" fill="#fff" stroke="#555" stroke-width="1"/></svg>
<svg style="left:12px;top:494px;" width="16" height="16" viewBox="0 0 16 16"><rect x="1.5" y="3" width="13" height="10.5" fill="#5a8ad0" stroke="#3a6ab0" stroke-width="0.8"/><rect x="1.5" y="3" width="13" height="2" fill="#2a5aa8"/><g fill="#e8f0fa"><rect x="2.5" y="6" width="3" height="2"/><rect x="6.5" y="6" width="3" height="2"/><rect x="10.5" y="6" width="3" height="2"/><rect x="2.5" y="9" width="3" height="2"/><rect x="6.5" y="9" width="3" height="2"/><rect x="10.5" y="9" width="3" height="2"/><rect x="2.5" y="11.5" width="3" height="1.5"/><rect x="6.5" y="11.5" width="3" height="1.5"/><rect x="10.5" y="11.5" width="3" height="1.5"/></g></svg>
<svg style="left:12px;top:516px;" width="16" height="16" viewBox="0 0 16 16"><path d="M2.5 14 L8 2 L13.5 14 M4.5 10 H11.5" stroke="#111" stroke-width="1.7" fill="none"/></svg>
<div style="left:1143px;top:106px;width:25px;height:390px;background:#f0f0f0;border-right:1px solid #a0a0a0;border-bottom:1px solid #a0a0a0;border-left:1px solid #fff;box-sizing:border-box"></div>
<div style="left:1147px;top:109px;width:18px;height:3px;border-top:1px solid #fff;border-bottom:1px solid #9a9a9a;box-sizing:border-box"></div>
<div style="left:1147px;top:113px;width:18px;height:3px;border-top:1px solid #fff;border-bottom:1px solid #9a9a9a;box-sizing:border-box"></div>
<svg style="left:1147px;top:120px;" width="16" height="16" viewBox="0 0 16 16"><path d="M1 14.5 H15" stroke="#222" stroke-width="1"/><path d="M14 1 L16 3 L8 12 L4 13 L5 9 Z" fill="#f0c820" stroke="#2a5aa0" stroke-width="0.8"/><path d="M5 9 L8 12 L6 14 Q3 15 3 12 Z" fill="#e04040"/><path d="M6.5 7.5 L9.5 10.5" stroke="#40c0c0" stroke-width="1.5"/></svg>
<svg style="left:1147px;top:142px;" width="16" height="16" viewBox="0 0 16 16"><circle cx="4.5" cy="5" r="3.5" fill="url(#gp)" stroke="#222" stroke-width="1.2"/><circle cx="11" cy="11.5" r="3.5" fill="url(#gp)" stroke="#222" stroke-width="1.2"/><circle cx="8.5" cy="9.5" r="3.5" fill="url(#gp)" stroke="#222" stroke-width="1.2"/><path d="M6 2 Q11 0 13 5" stroke="#1d4f9a" stroke-width="1.5" fill="none"/><path d="M10.5 4.5 L15.5 4.5 L13 8 Z" fill="#1d4f9a"/></svg>
<svg style="left:1147px;top:164px;" width="16" height="16" viewBox="0 0 16 16"><path d="M6.5 3 V14 H1.5 Z" fill="url(#gp)" stroke="#222" stroke-width="1.2"/><path d="M9.5 3 V14 H14.5 Z" fill="url(#gp)" stroke="#222" stroke-width="1.2"/><path d="M8 0 V16" stroke="#1060e0" stroke-width="1.2"/></svg>
<svg style="left:1147px;top:186px;" width="16" height="16" viewBox="0 0 16 16"><path d="M2 14 Q0 11 2 9 L5 9 Q4 4 8 3 Q12 3 11 9 L14 9 V14 Z" fill="none" stroke="#222" stroke-width="1.2"/><path d="M4 12 H14 M4 12 Q3 11 5 11 H8 V8" stroke="#1060e0" stroke-width="1.3" fill="none"/></svg>
<svg style="left:1147px;top:208px;" width="16" height="16" viewBox="0 0 16 16"><g fill="#fff" stroke="#111" stroke-width="1.3"><rect x="1.5" y="1.5" width="5" height="5"/><rect x="9.5" y="1.5" width="5" height="5"/><rect x="1.5" y="9.5" width="5" height="5"/><rect x="9.5" y="9.5" width="5" height="5"/></g></svg>
<svg style="left:1147px;top:230px;" width="16" height="16" viewBox="0 0 16 16"><path d="M8 1 V15 M1 8 H15" stroke="#2a5aa0" stroke-width="2.2"/><path d="M8 0 L4.5 4 H11.5 Z M8 16 L4.5 12 H11.5 Z M0 8 L4 4.5 V11.5 Z M16 8 L12 4.5 V11.5 Z" fill="#2a5aa0"/></svg>
<svg style="left:1147px;top:252px;" width="16" height="16" viewBox="0 0 16 16"><path d="M4 4 A6 6 0 1 0 9 2" stroke="#1d4f9a" stroke-width="2.2" fill="none"/><path d="M2 1 L8 0 L5 6 Z" fill="#1d4f9a"/></svg>
<svg style="left:1147px;top:274px;" width="16" height="16" viewBox="0 0 16 16"><rect x="1.5" y="1.5" width="13" height="13" fill="url(#gp)" stroke="#2a5aa0" stroke-width="1"/><rect x="1.5" y="7.5" width="7" height="7" fill="#fff" stroke="#111" stroke-width="1.2" stroke-dasharray="1.5,1"/></svg>
<svg style="left:1147px;top:296px;" width="16" height="16" viewBox="0 0 16 16"><path d="M7 1.5 H10 L15 14.5 H7 Z" fill="url(#gp)" stroke="#2a5aa0" stroke-width="1"/><rect x="1.5" y="1.5" width="5.5" height="13" fill="#fff" stroke="#111" stroke-width="1.2" stroke-dasharray="12,1,1.5,1,12"/></svg>
<svg style="left:1147px;top:318px;" width="16" height="16" viewBox="0 0 16 16"><path d="M0 8.5 H5" stroke="#111" stroke-width="1.3"/><path d="M9 8.5 H16" stroke="#1060e0" stroke-width="1.2" stroke-dasharray="2,1.5"/><path d="M4 14 L10 3" stroke="#1060e0" stroke-width="1.3"/></svg>
<svg style="left:1147px;top:340px;" width="16" height="16" viewBox="0 0 16 16"><path d="M0 8.5 H9" stroke="#111" stroke-width="1.2" stroke-dasharray="2,1.5"/><path d="M9 14 L14 3" stroke="#1060e0" stroke-width="1.3"/></svg>
<svg style="left:1147px;top:362px;" width="16" height="16" viewBox="0 0 16 16"><rect x="1.5" y="3.5" width="13" height="10" fill="url(#gp)" stroke="#111" stroke-width="1.2"/><rect x="6.5" y="2.0" width="3" height="3" fill="#1060e0" stroke="#0040a0" stroke-width="0.5"/></svg>
<svg style="left:1147px;top:384px;" width="16" height="16" viewBox="0 0 16 16"><path d="M5 3.5 H1.5 V13.5 H14.5 V3.5 H11" fill="url(#gp)" stroke="#111" stroke-width="1.2"/><rect x="3.5" y="2.0" width="3" height="3" fill="#1060e0" stroke="#0040a0" stroke-width="0.5"/><rect x="9.5" y="2.0" width="3" height="3" fill="#1060e0" stroke="#0040a0" stroke-width="0.5"/></svg>
<svg style="left:1147px;top:406px;" width="16" height="16" viewBox="0 0 16 16"><path d="M0 8 H16" stroke="#111" stroke-width="1.5"/><path d="M3 5 L7.5 8 L3 11 Z M13 5 L8.5 8 L13 11 Z" fill="#1d3f78"/></svg>
<svg style="left:1147px;top:428px;" width="16" height="16" viewBox="0 0 16 16"><path d="M2.5 16 V9 M8 2.5 H16" stroke="#111" stroke-width="1.3"/><path d="M2.5 2.5 H8 M2.5 2.5 V9" stroke="#111" stroke-width="1" stroke-dasharray="1,1"/><path d="M2.5 9.5 L8.5 2.5" stroke="#1060e0" stroke-width="1.5"/></svg>
<svg style="left:1147px;top:450px;" width="16" height="16" viewBox="0 0 16 16"><path d="M2.5 16 V10 M9 2.5 H16" stroke="#111" stroke-width="1.3"/><path d="M2.5 2.5 H9 M2.5 2.5 V10" stroke="#111" stroke-width="1" stroke-dasharray="1,1"/><path d="M2.5 11 Q3 3 10 2.5" stroke="#1060e0" stroke-width="2" fill="none"/></svg>
<svg style="left:1147px;top:472px;" width="16" height="16" viewBox="0 0 16 16"><path d="M1 14 L8 6 L11 9 L4 16 Z" fill="#d82020"/><path d="M3 11 L6 14 M5 9 L8 12" stroke="#f0c020" stroke-width="1.2"/><path d="M1 14 L3 16" stroke="#801010" stroke-width="1"/><path d="M10 5 L13 1 M11 6 L16 4 M12 2 L15 2" stroke="#6a8ac0" stroke-width="0.9"/><circle cx="13" cy="4" r="1.3" fill="#fff" stroke="#8aa0c8" stroke-width="0.5"/><path d="M7 6 L9 4" stroke="#f0d020" stroke-width="1"/></svg>
<div style="left:1143px;top:497px;width:25px;height:106px;background:#f0f0f0;border-right:1px solid #a0a0a0;border-bottom:1px solid #a0a0a0;border-left:1px solid #fff;border-top:1px solid #fff;box-sizing:border-box"></div>
<div style="left:1147px;top:500px;width:18px;height:3px;border-top:1px solid #fff;border-bottom:1px solid #9a9a9a;box-sizing:border-box"></div>
<div style="left:1147px;top:504px;width:18px;height:3px;border-top:1px solid #fff;border-bottom:1px solid #9a9a9a;box-sizing:border-box"></div>
<svg style="left:1147px;top:512px;" width="16" height="16" viewBox="0 0 16 16"><rect x="1.5" y="0.5" width="8" height="8" fill="#d8e6f4" stroke="#3a6ab0"/><rect x="6.5" y="8.5" width="9" height="7" fill="#e4eef8" stroke="#3a6ab0"/><rect x="3.5" y="3.5" width="9" height="9" fill="#4a78b0" stroke="#1d3f78"/></svg>
<svg style="left:1147px;top:534px;" width="16" height="16" viewBox="0 0 16 16"><rect x="1.5" y="0.5" width="8" height="7" fill="#d8e6f4" stroke="#3a6ab0"/><rect x="4.5" y="3.5" width="9" height="9" fill="#4a78b0" stroke="#1d3f78"/><rect x="7.5" y="8.5" width="8" height="7" fill="#e4eef8" stroke="#3a6ab0"/></svg>
<svg style="left:1147px;top:556px;" width="16" height="16" viewBox="0 0 16 16"><rect x="6.5" y="5.5" width="9" height="10" fill="#e4eef8" stroke="#3a6ab0"/><rect x="1.5" y="1.5" width="11" height="10" fill="#4a78b0" stroke="#1d3f78"/></svg>
<svg style="left:1147px;top:578px;" width="16" height="16" viewBox="0 0 16 16"><rect x="1.5" y="1.5" width="11" height="10" fill="#4a78b0" stroke="#1d3f78"/><rect x="5.5" y="5.5" width="10" height="10" fill="#e4eef8" stroke="#3a6ab0" opacity="0.9"/></svg>
<svg style="left:35px;top:107px;shape-rendering:crispEdges" width="1088" height="505" viewBox="0 0 1088 505"><path d="M486.5,26.5 L634.5,112.5 L634.5,282.6 L486.5,368.5 L338.5,282.6 L338.5,112.5 Z" stroke="#fff" stroke-width="1" fill="none"/><path d="M486.5,196.5 L486.5,320" stroke="#fff" stroke-width="1" stroke-dasharray="3,1" fill="none"/><path d="M486.5,321 L486.5,368" stroke="#fff" stroke-width="1" stroke-dasharray="1,3" fill="none"/><path d="M486.5,369 L486.5,505" stroke="#fff" stroke-width="1" stroke-dasharray="3,1" fill="none"/><path d="M438,368.5 L534,368.5" stroke="#fff" stroke-width="1"/><path d="M481,363 L492,374 M492,363 L481,374" stroke="#fff" stroke-width="1"/><rect x="11.5" y="484.5" width="8" height="8" stroke="#fff" fill="none"/><path d="M15.5,484 L15.5,440 M20,488.5 L64,488.5" stroke="#fff" fill="none"/><path d="M12,440 L15.5,429 L19,440 Z M14,440 L15.5,430 L17,440" stroke="#fff" fill="none"/><path d="M64,485 L75,488.5 L64,492 Z M64,487 L75,488.5 L64,490" stroke="#fff" fill="none"/><path d="M11.5,408 L17,415 L22.5,408 M17,415 L17,421" stroke="#fff" fill="none"/><path d="M84.5,483 L95,495 M95,483 L84.5,495" stroke="#fff" fill="none"/></svg>
<div style="left:34px;top:106px;width:1090px;height:1px;background:#a0a0a0"></div>
<div style="left:34px;top:106px;width:1px;height:506px;background:#a0a0a0"></div>
<div style="left:35px;top:107px;width:1089px;height:1px;background:#696969"></div>
<div style="left:35px;top:107px;width:1px;height:505px;background:#696969"></div>
<div style="left:537px;top:492px;width:141px;height:22px;box-sizing:border-box;background:#1c1d6b;border:1px solid #c8c8e8"></div>
<div class="t" style="left:541px;top:495px;font-size:12.8px;color:#e0e0ee;line-height:16px">极轴: 672.2238 <span style="font-size:10px">&nbsp;&lt;</span> 270°</div>
<div style="left:8px;top:635px;width:1160px;height:55px;background:#f0f0f0"></div>
<div style="left:14px;top:643px;width:7px;height:41px;border-left:1px solid #fff;border-top:1px solid #fff;border-right:1px solid #a0a0a0;border-bottom:1px solid #a0a0a0;box-sizing:border-box"></div>
<div style="left:16px;top:643px;width:3px;height:41px;border-right:1px solid #a0a0a0;box-sizing:border-box"></div>
<div style="left:24px;top:644px;width:1137px;height:45px;background:#fff;border-top:2px solid #6e6e6e;border-left:2px solid #6e6e6e;border-bottom:1px solid #a0a0a0;box-sizing:border-box"></div>
<div style="left:24px;top:668px;width:1137px;height:1px;background:#a0a0a0"></div>
<div style="left:1144px;top:646px;width:16px;height:22px;background:#ececec"></div>
<svg style="left:1149px;top:651px;" width="7" height="4" viewBox="0 0 7 4"><path d="M0 4 L3.5 0 L7 4 Z" fill="#333"/></svg>
<svg style="left:1149px;top:662px;" width="7" height="4" viewBox="0 0 7 4"><path d="M0 0 L3.5 4 L7 0 Z" fill="#333"/></svg>
<div style="left:1074px;top:669px;width:70px;height:19px;background:#ececec"></div>
<div style="left:1143px;top:669px;width:25px;height:20px;background:#f0f0f0"></div>
<svg style="left:1082px;top:615px;" width="1" height="1" viewBox="0 0 1 1"></svg>
<svg style="left:1083px;top:675px;" width="4" height="7" viewBox="0 0 4 7"><path d="M4 0 L0 3.5 L4 7 Z" fill="#333"/></svg>
<svg style="left:1133px;top:675px;" width="4" height="7" viewBox="0 0 4 7"><path d="M0 0 L4 3.5 L0 7 Z" fill="#333"/></svg>
<div style="left:1094px;top:670px;width:15px;height:16px;background:linear-gradient(#f6f6f6,#e6e6e6 50%,#d0d0d0);border:1px solid #a8a8a8;border-radius:2px;box-sizing:border-box"></div>
<div class="t" style="left:27px;top:644px;font-size:16px;color:#000;line-height:17px"><span style="font-size:15px;letter-spacing:1px">输入选项</span><span class="m" style="font-size:12px;letter-spacing:0.8px"> [</span><span style="font-size:15px;letter-spacing:1px">内接于圆</span><span class="m" style="font-size:12px;letter-spacing:0.8px">(I)/</span><span style="font-size:15px;letter-spacing:1px">外切于圆</span><span class="m" style="font-size:12px;letter-spacing:0.8px">(C)] &lt;I&gt;: I</span></div>
<div class="t" style="left:27px;top:668px;font-size:16px;color:#000;line-height:17px"><span style="font-size:15px;letter-spacing:1px">指定圆的半径</span><span class="m" style="font-size:12px;letter-spacing:0.8px">:</span></div>
<div style="left:8px;top:687px;width:1160px;height:1px;background:#f4f4f4"></div>
<div style="left:8px;top:688px;width:1160px;height:1px;background:#fff"></div>
<div style="left:8px;top:689px;width:1160px;height:1px;background:#9a9a9a"></div>
<div style="left:8px;top:690px;width:1160px;height:1px;background:#fff"></div>
<div style="left:8px;top:691px;width:1160px;height:1px;background:#9a9a9a"></div>
<div style="left:8px;top:692px;width:1160px;height:1px;background:#fff"></div>
<div style="left:8px;top:693px;width:1160px;height:19px;background:#f0eded"></div>
<div style="left:8px;top:712px;width:1160px;height:1px;background:#fff"></div>
<div style="left:13px;top:694px;width:186px;height:18px;border:1px solid #a0a0a0;border-right-color:#c8c8c8;border-bottom-color:#c8c8c8;box-sizing:border-box"></div>
<div class="t" style="left:15px;top:697px;font-size:11px;color:#000;line-height:14px;transform:scaleY(1.1);transform-origin:0 50%"><span style="display:inline-block;width:6px;text-align:center">1</span><span style="display:inline-block;width:6px;text-align:center">9</span><span style="display:inline-block;width:6px;text-align:center">1</span><span style="display:inline-block;width:6px;text-align:center">0</span><span style="display:inline-block;width:6px;text-align:center">.</span><span style="display:inline-block;width:6px;text-align:center">6</span><span style="display:inline-block;width:6px;text-align:center">0</span><span style="display:inline-block;width:6px;text-align:center">0</span><span style="display:inline-block;width:6px;text-align:center">3</span><span style="display:inline-block;width:6px;text-align:center">,</span><span style="display:inline-block;width:6px;text-align:center">&nbsp;</span><span style="display:inline-block;width:6px;text-align:center">5</span><span style="display:inline-block;width:6px;text-align:center">3</span><span style="display:inline-block;width:6px;text-align:center">6</span><span style="display:inline-block;width:6px;text-align:center">.</span><span style="display:inline-block;width:6px;text-align:center">5</span><span style="display:inline-block;width:6px;text-align:center">9</span><span style="display:inline-block;width:6px;text-align:center">9</span><span style="display:inline-block;width:6px;text-align:center">7</span><span style="display:inline-block;width:6px;text-align:center">&nbsp;</span><span style="display:inline-block;width:6px;text-align:center">,</span><span style="display:inline-block;width:6px;text-align:center">&nbsp;</span><span style="display:inline-block;width:6px;text-align:center">0</span><span style="display:inline-block;width:6px;text-align:center">.</span><span style="display:inline-block;width:6px;text-align:center">0</span><span style="display:inline-block;width:6px;text-align:center">0</span><span style="display:inline-block;width:6px;text-align:center">0</span><span style="display:inline-block;width:6px;text-align:center">0</span></div>
<div style="left:203px;top:694px;width:28px;height:19px;border-top:1px solid #fff;border-left:1px solid #fff;border-right:1px solid #a0a0a0;border-bottom:1px solid #a0a0a0;background:#f0eeee;box-sizing:border-box"></div>
<div class="t" style="left:205px;top:696px;font-size:12px;color:#000;line-height:17px">捕捉</div>
<div style="left:235px;top:694px;width:28px;height:19px;border-top:1px solid #fff;border-left:1px solid #fff;border-right:1px solid #a0a0a0;border-bottom:1px solid #a0a0a0;background:#f0eeee;box-sizing:border-box"></div>
<div class="t" style="left:237px;top:696px;font-size:12px;color:#000;line-height:17px">栅格</div>
<div style="left:267px;top:694px;width:28px;height:19px;border-top:1px solid #fff;border-left:1px solid #fff;border-right:1px solid #a0a0a0;border-bottom:1px solid #a0a0a0;background:#f0eeee;box-sizing:border-box"></div>
<div class="t" style="left:269px;top:696px;font-size:12px;color:#000;line-height:17px">正交</div>
<div style="left:299px;top:694px;width:29px;height:19px;border-top:2px solid #222;border-left:2px solid #222;border-right:1px solid #fff;background:#fbfbfb;box-sizing:border-box"></div>
<div class="t" style="left:301px;top:696px;font-size:12px;color:#000;line-height:17px">极轴</div>
<div style="left:331px;top:694px;width:52px;height:19px;border-top:2px solid #222;border-left:2px solid #222;border-right:1px solid #fff;background:#fbfbfb;box-sizing:border-box"></div>
<div class="t" style="left:333px;top:696px;font-size:12px;color:#000;line-height:17px">对象捕捉</div>
<div style="left:387px;top:694px;width:53px;height:19px;border-top:2px solid #222;border-left:2px solid #222;border-right:1px solid #fff;background:#fbfbfb;box-sizing:border-box"></div>
<div class="t" style="left:389px;top:696px;font-size:12px;color:#000;line-height:17px">对象追踪</div>
<div style="left:443px;top:694px;width:29px;height:19px;border-top:2px solid #222;border-left:2px solid #222;border-right:1px solid #fff;background:#fbfbfb;box-sizing:border-box"></div>
<div class="t" style="left:446px;top:697px;font-family:Liberation Serif,serif;font-size:10.5px;color:#000;line-height:15px;transform:scale(0.82,1.25);transform-origin:0 50%;font-weight:bold">DUCS</div>
<div style="left:475px;top:694px;width:23px;height:19px;border-top:2px solid #222;border-left:2px solid #222;border-right:1px solid #fff;background:#fbfbfb;box-sizing:border-box"></div>
<div class="t" style="left:478px;top:697px;font-family:Liberation Serif,serif;font-size:10.5px;color:#000;line-height:15px;transform:scale(0.82,1.25);transform-origin:0 50%;font-weight:bold">DYN</div>
<div style="left:501px;top:694px;width:29px;height:19px;border-top:1px solid #fff;border-left:1px solid #fff;border-right:1px solid #a0a0a0;border-bottom:1px solid #a0a0a0;background:#f0eeee;box-sizing:border-box"></div>
<div class="t" style="left:503px;top:696px;font-size:12px;color:#000;line-height:17px">线宽</div>
<div style="left:533px;top:694px;width:29px;height:19px;border-top:2px solid #222;border-left:2px solid #222;border-right:1px solid #fff;background:#fbfbfb;box-sizing:border-box"></div>
<div class="t" style="left:535px;top:696px;font-size:12px;color:#000;line-height:17px">模型</div>
<div class="t" style="left:937px;top:695px;font-size:13px;color:#000;line-height:17px">注释比例:</div>
<div class="t" style="left:999px;top:696px;font-size:12px;letter-spacing:1.5px;color:#000;line-height:16px">1:1</div>
<svg style="left:1021px;top:701px;" width="9" height="5" viewBox="0 0 9 5"><path d="M0 0 L9 0 L4.5 5 Z" fill="#000"/></svg>
<svg style="left:1119px;top:704px;" width="8" height="5" viewBox="0 0 8 5"><path d="M0 0 L8 0 L4 5 Z" fill="#000"/></svg>
<div style="left:36px;top:613px;width:14px;height:13px;background:#f0f0f0;border-right:1px solid #a0a0a0;border-bottom:1px solid #a0a0a0;border-left:1px solid #fff;box-sizing:border-box"></div>
<svg style="left:38px;top:614px;" width="10" height="11" viewBox="0 0 10 11"><rect x="2" y="1.5" width="1.2" height="8" fill="#707070"/><path d="M9 1.5 L4 5.5 L9 9.5 Z" fill="#707070"/></svg>
<div style="left:50px;top:613px;width:14px;height:13px;background:#f0f0f0;border-right:1px solid #a0a0a0;border-bottom:1px solid #a0a0a0;border-left:1px solid #fff;box-sizing:border-box"></div>
<svg style="left:52px;top:614px;" width="10" height="11" viewBox="0 0 10 11"><path d="M8 1.5 L3 5.5 L8 9.5 Z" fill="#707070"/></svg>
<div style="left:64px;top:613px;width:14px;height:13px;background:#f0f0f0;border-right:1px solid #a0a0a0;border-bottom:1px solid #a0a0a0;border-left:1px solid #fff;box-sizing:border-box"></div>
<svg style="left:66px;top:614px;" width="10" height="11" viewBox="0 0 10 11"><path d="M3 1.5 L8 5.5 L3 9.5 Z" fill="#707070"/></svg>
<div style="left:78px;top:613px;width:14px;height:13px;background:#f0f0f0;border-right:1px solid #a0a0a0;border-bottom:1px solid #a0a0a0;border-left:1px solid #fff;box-sizing:border-box"></div>
<svg style="left:80px;top:614px;" width="10" height="11" viewBox="0 0 10 11"><path d="M2 1.5 L7 5.5 L2 9.5 Z" fill="#707070"/><rect x="7.8" y="1.5" width="1.2" height="8" fill="#707070"/></svg>
<svg style="left:0px;top:612px;" width="240" height="15" viewBox="0 0 240 15"><path d="M137.5,0 L134,14.5 M183.5,0 L180,14.5 M230.5,0 L227,14.5" stroke="#6a6a6a" stroke-width="1" fill="none"/><path d="M92,0 L98,14.5 L132,14.5 L138,0 Z" fill="#000"/></svg>
<div class="t" style="left:103px;top:613px;font-size:12px;line-height:15px;color:#fff">模型</div>
<div class="t" style="left:143px;top:613px;font-size:12px;line-height:15px;color:#000">布局<span style="font-size:11px">1</span></div>
<div class="t" style="left:189px;top:613px;font-size:12px;line-height:15px;color:#000">布局<span style="font-size:11px">2</span></div>
<div style="left:752px;top:612px;width:371px;height:15px;background:#ebebeb"></div>
<div style="left:752px;top:612px;width:371px;height:1px;background:#fff"></div>
<div style="left:753px;top:613px;width:5px;height:12px;border:1px solid #a8b0b8;border-right:none;border-radius:2px 0 0 2px;background:#f8f8f8;box-sizing:border-box"></div>
<svg style="left:764px;top:616px;" width="4" height="7" viewBox="0 0 4 7"><path d="M4 0 L0 3.5 L4 7 Z" fill="#333"/></svg>
<div style="left:1090px;top:613px;width:15px;height:13px;background:linear-gradient(#f6f6f6,#e8e8e8 50%,#d4d4d4);border:1px solid #a8a8a8;border-radius:2px;box-sizing:border-box"></div>
<svg style="left:1113px;top:616px;" width="4" height="7" viewBox="0 0 4 7"><path d="M0 0 L4 3.5 L0 7 Z" fill="#333"/></svg>
<div style="left:1123px;top:612px;width:17px;height:15px;background:#f0f0f0;border-right:1px solid #e0e0e0;box-sizing:border-box"></div>
<svg style="left:1040px;top:695px;" width="17" height="16" viewBox="0 0 17 16"><path d="M3 13 L7 6 L11 13 Z M5 15 L9 8" fill="none" stroke="#2a5aa8" stroke-width="1.6"/><circle cx="12" cy="5" r="3.5" fill="#f8f080" stroke="#c0a020" stroke-width="0.7"/></svg>
<svg style="left:1065px;top:695px;" width="16" height="16" viewBox="0 0 16 16"><path d="M3 13 L7 6 L11 13 Z" fill="none" stroke="#a8a8a8" stroke-width="1.6"/><path d="M7 12 L14 3" stroke="#a8a8a8" stroke-width="2"/></svg>
<div style="left:1090px;top:694px;width:24px;height:19px;background:#f6f6f6;border-top:1px solid #a0a0a0;border-left:1px solid #a0a0a0;box-sizing:border-box"></div>
<svg style="left:1093px;top:695px;" width="18" height="17" viewBox="0 0 18 17"><path d="M9 8 V5 Q9 1 12.5 1 Q16 1 16 5 V7" stroke="#d8c020" stroke-width="2" fill="none"/><path d="M9 8 V5 Q9 1 12.5 1 Q16 1 16 5 V7" stroke="#6a5a10" stroke-width="0.6" fill="none"/><rect x="1" y="7" width="10" height="9" rx="1" fill="#e0c020" stroke="#6a5a10" stroke-width="0.8"/><path d="M2 10 H10 M2 13 H10" stroke="#fff8a0" stroke-width="1"/></svg>
<svg style="left:1135px;top:695px;" width="17" height="16" viewBox="0 0 17 16"><rect x="0.8" y="0.8" width="15.4" height="14.4" fill="#fff" stroke="#1d4f9a" stroke-width="1.6"/><rect x="3" y="3" width="11" height="10" fill="url(#gb)" stroke="#1d4f9a" stroke-width="0.8"/><defs><linearGradient id="gb" x1="0" y1="0" x2="1" y2="1"><stop offset="0" stop-color="#d8e8f8"/><stop offset="1" stop-color="#7aa0cc"/></linearGradient></defs></svg>
<svg style="left:1157px;top:702px;" width="11" height="11" viewBox="0 0 11 11"><g fill="#fff"><rect x="7" y="1" width="1" height="1"/><rect x="4" y="4" width="1" height="1"/><rect x="7" y="4" width="1" height="1"/><rect x="1" y="7" width="1" height="1"/><rect x="4" y="7" width="1" height="1"/><rect x="7" y="7" width="1" height="1"/></g><g fill="#a0a0a0"><rect x="8" y="2" width="2" height="2"/><rect x="5" y="5" width="2" height="2"/><rect x="8" y="5" width="2" height="2"/><rect x="2" y="8" width="2" height="2"/><rect x="5" y="8" width="2" height="2"/><rect x="8" y="8" width="2" height="2"/></g></svg>
<div style="left:1168px;top:30px;width:6px;height:691px;background:#b9d1ea"></div>
<div style="left:1174px;top:1px;width:1px;height:719px;background:#6fd8f4"></div>
<div style="left:1175px;top:0px;width:1px;height:721px;background:#1a1a1a"></div>
<div style="left:0px;top:713px;width:1174px;height:6px;background:#b9d1ea"></div>
<div style="left:1px;top:719px;width:1174px;height:1px;background:#3cd4f4"></div>
<div style="left:0px;top:720px;width:1176px;height:1px;background:#1a1a1a"></div>
<div style="left:0px;top:30px;width:8px;height:683px;background:#b9d1ea"></div>
<div style="left:0px;top:0px;width:1px;height:721px;background:#2a2a2a"></div>
<div style="left:1px;top:30px;width:1px;height:689px;background:#eef3f9"></div>
</div></body></html>
